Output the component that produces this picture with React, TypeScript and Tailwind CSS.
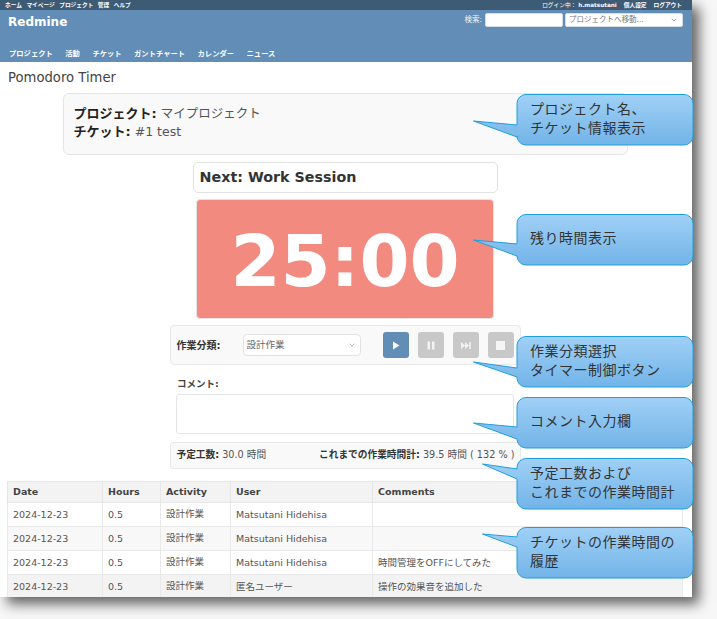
import { ReactNode } from "react";
import { ChevronDown } from "lucide-react";

const font = "font-['DejaVu_Sans','Noto_Sans_CJK_JP',sans-serif]";

interface CalloutProps {
  className: string;
  tipX: number;
  tipY: number;
  baseTop: number;
  baseBottom: number;
  children: ReactNode;
}

// body is always 176x51, the svg also holds the tail on its left
const Callout = ({ className, tipX, tipY, baseTop, baseBottom, children }: CalloutProps) => {
  const w = 176;
  const h = 51;
  const r = 9;
  const x = tipX;
  const d = `M${x + r} 0.5 H${x + w - r} a${r} ${r} 0 0 1 ${r} ${r} V${h - r} a${r} ${r} 0 0 1 -${r} ${r} H${x + r} a${r} ${r} 0 0 1 -${r} -${r} V${baseBottom} L0.5 ${tipY} L${x} ${baseTop} V${r + 0.5} a${r} ${r} 0 0 1 ${r} -${r} Z`;
  return (
    <div className={`absolute h-[52px] w-[221px] ${className}`}>
      <svg width={x + w + 1} height={h + 2} className="absolute left-0 top-0">
        <defs>
          <linearGradient id={`g${tipX}${tipY}${baseTop}`} x1="0" y1="0" x2="0" y2="1">
            <stop offset="0" stopColor="#a0d0f6" />
            <stop offset="1" stopColor="#72b4e8" />
          </linearGradient>
        </defs>
        <path d={d} fill={`url(#g${tipX}${tipY}${baseTop})`} stroke="#1e9fdc" strokeWidth="1" />
      </svg>
      {children}
    </div>
  );
};

const CalloutText = ({ className, children }: { className: string; children: ReactNode }) => (
  <div className={`absolute top-0 flex h-[47px] flex-col justify-center whitespace-nowrap text-[14px] leading-[19px] tracking-[0.5px] text-[#333] font-['Noto_Sans_CJK_JP',sans-serif] ${className}`}>
    {children}
  </div>
);

const rows = [
  { date: "2024-12-23", user: "Matsutani Hidehisa", comment: "", bg: "bg-white" },
  { date: "2024-12-23", user: "Matsutani Hidehisa", comment: "", bg: "bg-[#f8f8f8]" },
  { date: "2024-12-23", user: "Matsutani Hidehisa", comment: "時間管理をOFFにしてみた", bg: "bg-white" },
  { date: "2024-12-23", user: "匿名ユーザー", comment: "操作の効果音を追加した", bg: "bg-[#f3f3f3]" },
];

export default function App() {
  return (
    <div className={`relative h-[619px] w-[717px] overflow-hidden bg-[#f7f7f7] ${font}`}>
      <div className="h-[597px] w-[692px] overflow-hidden bg-white shadow-[7px_7px_12px_rgba(0,0,0,0.6)]">
        <div className="flex h-[10px] items-center justify-between bg-[#3e5b76] pl-[5px] pr-[10px] text-[5.7px] font-bold text-white">
          <div className="flex gap-[4.5px]">
            <span>ホーム</span>
            <span>マイページ</span>
            <span>プロジェクト</span>
            <span>管理</span>
            <span>ヘルプ</span>
          </div>
          <div className="flex gap-[7px]">
            <span className="font-normal">
              ログイン中： <b>h.matsutani</b>
            </span>
            <span>個人設定</span>
            <span>ログアウト</span>
          </div>
        </div>

        <div className="relative h-[52px] bg-[#628db6] text-white">
          <div className="flex items-start justify-between pl-2 pr-[9px] pt-[3px]">
            <div className="pt-[1px] text-[12px] font-bold leading-[17px]">Redmine</div>
            <div className="flex items-center gap-[2px] text-[7.5px]">
              <span className="mr-[1px] opacity-90">検索:</span>
              <div className="h-[14px] w-[78px] rounded-[2px] border border-[#d5dde5] bg-white" />
              <div className="flex h-[14px] w-[118px] items-center justify-between rounded-[2px] border border-[#d5dde5] bg-white pl-[3px] pr-1 text-[#777]">
                <span>プロジェクトへ移動...</span>
                <ChevronDown className="h-[8px] w-[8px]" />
              </div>
            </div>
          </div>
          <div className="absolute bottom-[3px] left-[9px] flex gap-[12.5px] text-[7.3px] font-bold leading-[10px]">
            <span>プロジェクト</span>
            <span>活動</span>
            <span>チケット</span>
            <span>ガントチャート</span>
            <span>カレンダー</span>
            <span>ニュース</span>
          </div>
        </div>

        <div className="pl-[7px] pr-[9px]">
          <h2 className="ml-[1px] mt-[7px] text-[13.2px] font-medium leading-[17px] text-[#444]">Pomodoro Timer</h2>

          <div className="mx-auto mt-[7px] flex h-[62px] w-[565px] flex-col justify-center rounded-[6px] border border-[#e6e6e6] bg-[#f9f9f9] pb-[2px] pl-[10px] text-[12.5px] leading-[18px] text-[#555]">
            <div>
              <b className="text-[13px] text-[#222]">プロジェクト:</b> マイプロジェクト
            </div>
            <div>
              <b className="text-[13px] text-[#222]">チケット:</b> #1 test
            </div>
          </div>

          <div className="mx-auto mt-[7px] flex h-[31px] w-[305px] items-center rounded-[5px] border border-[#e2e2e2] bg-white pl-[6px] pt-[1px] text-[14.3px] font-bold text-[#333]">
            Next: Work Session
          </div>

          <div className="mx-auto mt-[6px] flex h-[120px] w-[298px] items-center justify-center rounded-[4px] border border-[#e4e4e4] bg-[#f38a80] pt-[4px] text-[72px] font-bold leading-none text-white">
            25:00
          </div>

          <div className="mx-auto mt-[6px] flex h-[40px] w-[351px] items-center rounded-[4px] border border-[#e8e8e8] bg-[#f9f9f9] pl-[6px] text-[9.5px]">
            <b className="w-[66px] text-[10px] text-[#333]">作業分類:</b>
            <div className="flex h-[22px] w-[118px] items-center justify-between rounded-[4px] border border-[#e2e2e2] bg-white pl-[3px] pr-1 text-[#666]">
              <span>設計作業</span>
              <ChevronDown className="h-[8px] w-[8px] text-[#999]" />
            </div>
            <div className="ml-[22px] flex gap-[9px]">
              <button className="flex h-[26px] w-[26px] items-center justify-center rounded-[3px] bg-[#628db6]">
                <svg width="8" height="9" viewBox="0 0 8 9" fill="white">
                  <path d="M1 0.5 L7.5 4.5 L1 8.5 Z" />
                </svg>
              </button>
              <button className="flex h-[26px] w-[26px] items-center justify-center rounded-[3px] bg-[#c8c8c8]">
                <svg width="8" height="9" viewBox="0 0 8 9" fill="#f2f2f2">
                  <rect x="0.5" y="0.5" width="2.5" height="8" />
                  <rect x="5" y="0.5" width="2.5" height="8" />
                </svg>
              </button>
              <button className="flex h-[26px] w-[26px] items-center justify-center rounded-[3px] bg-[#c8c8c8]">
                <svg width="10" height="7" viewBox="0 0 10 7" fill="#f2f2f2">
                  <path d="M0 0 L4 3.5 L0 7 Z M4 0 L8 3.5 L4 7 Z" />
                  <rect x="8.2" y="0" width="1.6" height="7" />
                </svg>
              </button>
              <button className="flex h-[26px] w-[26px] items-center justify-center rounded-[3px] bg-[#c8c8c8]">
                <span className="h-[9px] w-[9px] bg-[#f5f5f5]" />
              </button>
            </div>
          </div>

          <div className="ml-[170px] mt-[13px] text-[9.5px] font-bold leading-[11px] text-[#444]">コメント:</div>
          <div className="ml-[169px] mt-[5px] h-[40px] w-[338px] rounded-[3px] border border-[#e6e6e6] bg-white" />

          <div className="mx-auto mt-[8px] flex h-[27px] w-[351px] items-center justify-between rounded-[3px] border border-[#e8e8e8] bg-[#f9f9f9] pl-[6px] pr-[5px] text-[9.7px] text-[#555]">
            <span>
              <b className="text-[#333]">予定工数:</b> 30.0 時間
            </span>
            <span>
              <b className="text-[#333]">これまでの作業時間計:</b> 39.5 時間 ( 132 % )
            </span>
          </div>

          <table className="mt-[12px] w-[676px] table-fixed border-collapse text-[9.5px] text-[#555]">
            <thead>
              <tr className="h-[21px] bg-[#f3f3f3] text-left text-[#444]">
                <th className="w-[95px] border border-[#e6e6e6] pl-[5px] font-bold">Date</th>
                <th className="w-[58px] border border-[#e6e6e6] pl-[5px] font-bold">Hours</th>
                <th className="w-[70px] border border-[#e6e6e6] pl-[5px] font-bold">Activity</th>
                <th className="w-[142px] border border-[#e6e6e6] pl-[5px] font-bold">User</th>
                <th className="border border-[#e6e6e6] pl-[5px] font-bold">Comments</th>
              </tr>
            </thead>
            <tbody>
              {rows.map((row, i) => (
                <tr key={i} className={`h-[24px] ${row.bg}`}>
                  <td className="border border-[#e9e9e9] pl-[5px] pt-[1px]">{row.date}</td>
                  <td className="border border-[#e9e9e9] pl-[5px] pt-[1px]">0.5</td>
                  <td className="border border-[#e9e9e9] pl-[5px]">設計作業</td>
                  <td className="border border-[#e9e9e9] pl-[5px] pt-[1px]">{row.user}</td>
                  <td className="border border-[#e9e9e9] pl-[5px] pt-[1px]">{row.comment}</td>
                </tr>
              ))}
            </tbody>
          </table>
        </div>
      </div>

      <Callout className="left-[473px] top-[94px]" tipX={44} tipY={27} baseTop={31} baseBottom={43}>
        <CalloutText className="left-[57px]">
          <span>プロジェクト名、</span>
          <span>チケット情報表示</span>
        </CalloutText>
      </Callout>
      <Callout className="left-[473px] top-[214px]" tipX={44} tipY={26} baseTop={30} baseBottom={42}>
        <CalloutText className="left-[57px]">
          <span>残り時間表示</span>
        </CalloutText>
      </Callout>
      <Callout className="left-[473px] top-[336px]" tipX={44} tipY={26} baseTop={32} baseBottom={41}>
        <CalloutText className="left-[57px]">
          <span>作業分類選択</span>
          <span>タイマー制御ボタン</span>
        </CalloutText>
      </Callout>
      <Callout className="left-[473px] top-[397px]" tipX={44} tipY={26} baseTop={30} baseBottom={42}>
        <CalloutText className="left-[57px]">
          <span>コメント入力欄</span>
        </CalloutText>
      </Callout>
      <Callout className="left-[482px] top-[458px]" tipX={35} tipY={6} baseTop={11} baseBottom={21}>
        <CalloutText className="left-[48px]">
          <span>予定工数および</span>
          <span>これまでの作業時間計</span>
        </CalloutText>
      </Callout>
      <Callout className="left-[482px] top-[527px]" tipX={35} tipY={7} baseTop={10} baseBottom={20}>
        <CalloutText className="left-[48px]">
          <span>チケットの作業時間の</span>
          <span>履歴</span>
        </CalloutText>
      </Callout>
    </div>
  );
}
